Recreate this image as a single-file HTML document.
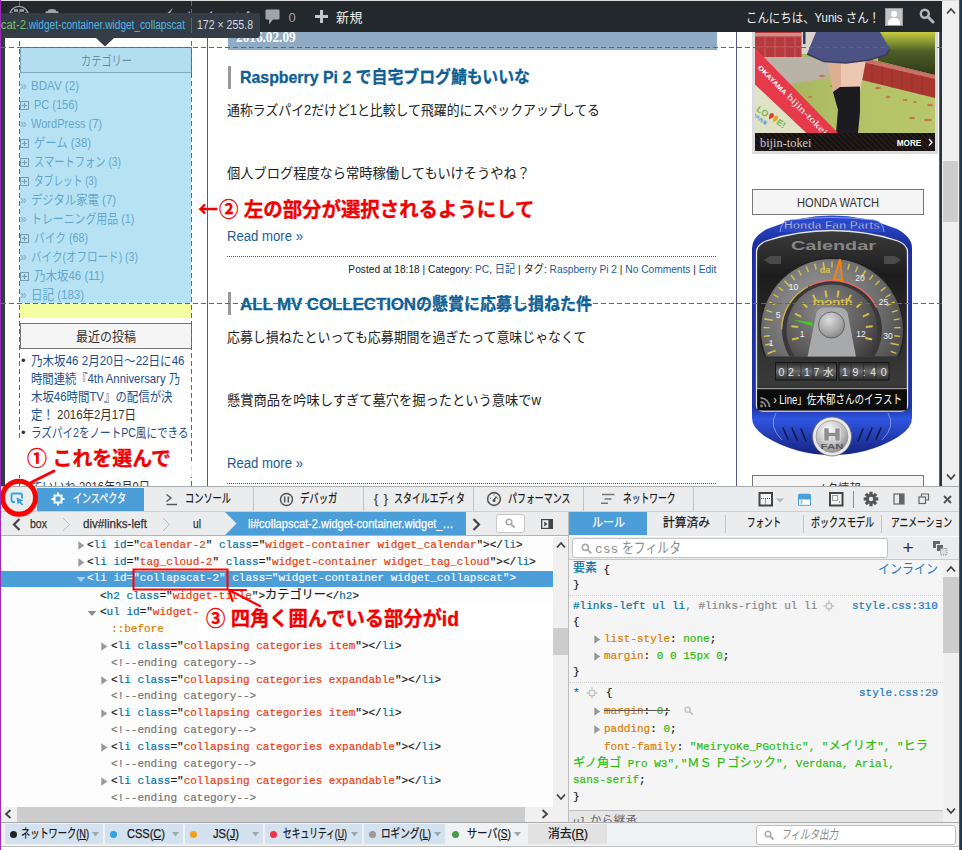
<!DOCTYPE html>
<html lang="ja"><head>
<meta charset="utf-8">
<title>Inspector</title>
<style>
html,body{margin:0;padding:0;background:#fff;}
body{width:962px;height:850px;overflow:hidden;position:relative;font-family:"Liberation Sans","Noto Sans CJK JP",sans-serif;font-size:13px;color:#222;}
.abs{position:absolute;}
#win{position:absolute;left:0;top:0;width:962px;height:850px;overflow:hidden;}
/* ---------- page ---------- */
#page{position:absolute;left:0;top:0;width:942px;height:486px;background:#fff;overflow:hidden;}
#adminbar{position:absolute;left:0;top:1px;width:942px;height:31px;background:#23282d;color:#eee;}
.vline{position:absolute;top:32px;width:1px;height:454px;background:#5a5890;}
.side li{list-style:none;}
.cat{position:absolute;left:19px;font-size:13px;color:#2a6a9e;white-space:nowrap;line-height:19px;height:19px;}
.cat{left:20px}.cat i{font-style:normal;color:#777;display:inline-block;width:11px;font-size:12px;letter-spacing:0}.cat i.p{width:14px;font-size:11px;color:#555}
.wtitle{position:absolute;box-sizing:border-box;border:1px solid #777;background:#f5f5f5;text-align:center;font-size:13px;color:#333;line-height:26px;height:26px;}
.body{position:absolute;left:227px;font-size:14px;color:#222;white-space:nowrap;line-height:20px;}
.ptitle{-webkit-text-stroke:0.3px #0e5f96;position:absolute;left:240px;font-size:17px;font-weight:bold;color:#0e5f96;white-space:nowrap;line-height:24px;}
.tbar{position:absolute;left:227px;width:3px;height:23px;background:#999;}
.more{position:absolute;left:227px;font-size:14px;color:#1a5c9a;white-space:nowrap;line-height:20px;}
.dots{position:absolute;left:227px;width:489px;height:0;border-top:1px dotted #555;}
.red{position:absolute;color:#f00000;font-weight:bold;white-space:nowrap;}
.rp{position:absolute;left:31px;font-size:13px;color:#1c4f8c;white-space:nowrap;line-height:18px;height:18px;}
.rp em span{color:#333}.rp em{font-style:normal}
.rp b{position:absolute;left:-10px;font-weight:normal;color:#333}
.meta{position:absolute;right:226px;font-size:11.5px;color:#222;white-space:nowrap;line-height:16px;}
.meta a{color:#1a5c9a}
/* ---------- devtools ---------- */
.tab,.stab,.bc,.cb{-webkit-text-stroke:0.25px currentColor}
.ml,.rl{-webkit-text-stroke:0.2px currentColor}
.red{-webkit-text-stroke:0.3px #f00000}
.bc{position:absolute;top:512px;height:24px;line-height:24px;font-size:12.5px;white-space:nowrap;color:#333;}
.selrow,.selrow *{color:#f5f7fa}
.jp{font-family:"Liberation Sans","Noto Sans CJK JP",sans-serif;font-size:12.2px}

#dt{position:absolute;left:0;top:0;width:962px;height:850px;clip-path:inset(486px 0 0 0);font-size:12px;color:#18191a;}
.mono{font-family:"Liberation Mono",monospace;font-size:11px;}
.tab{position:absolute;top:487px;height:24px;line-height:24px;width:110px;box-sizing:border-box;border-right:1px solid #c3c3c3;text-align:center;white-space:nowrap;font-size:12.5px;color:#18191a;}
.ml{position:absolute;white-space:nowrap;height:17px;line-height:17px;font-family:"Liberation Mono",monospace;font-size:11px;color:#18191a;}
.t{color:#0072ab}.a{color:#0072ab}.v{color:#ed2655}.vv{color:#ea3c0c}
.rl svg{}.c{color:#747474}
.stab{position:absolute;top:512px;height:23px;line-height:23px;width:78px;text-align:center;white-space:nowrap;font-size:12.5px;color:#18191a;}
.rl{position:absolute;white-space:nowrap;font-family:"Liberation Mono",monospace;font-size:11px;line-height:17px;height:17px;color:#18191a;}
.pn{color:#d97e00}.pv{color:#2cbb0f}.sel{color:#0072ab}.gr{color:#888}
.cb{position:absolute;top:824px;height:20px;line-height:20px;background:#d4e1ee;font-size:12.5px;white-space:nowrap;color:#18191a;}
</style>
</head>
<body>
<div id="win">
<div id="page">
 <div class="vline" style="left:207px"></div>
 <div class="vline" style="left:736px"></div>
 <!-- left sidebar -->
 <div class="wtitle" style="left:20px;top:47.3px;width:172px;height:25.7px;"><span style="display: inline-block; transform: scaleX(0.7844); transform-origin: 0px 50%; margin-right: -14.02px;">カテゴリー</span></div>
 <div class="cat" style="top:76px"><i>»</i><span style="display: inline-block; transform: scaleX(0.8899); transform-origin: 0px 50%; margin-right: -5.94px;">BDAV (2)</span></div>
 <div class="cat" style="top:95px"><i class="p"><svg width="9" height="9" viewBox="0 0 9 9" style="vertical-align:-1px"><rect x="0.5" y="0.5" width="8" height="8" fill="none" stroke="#555"></rect><path d="M2 4.5H7M4.5 2V7" stroke="#555"></path></svg></i><span style="display: inline-block; transform: scaleX(0.8456); transform-origin: 0px 50%; margin-right: -8.03px;">PC (156)</span></div>
 <div class="cat" style="top:114px"><i>»</i><span style="display: inline-block; transform: scaleX(0.8497); transform-origin: 0px 50%; margin-right: -12.56px;">WordPress (7)</span></div>
 <div class="cat" style="top:133px"><i class="p"><svg width="9" height="9" viewBox="0 0 9 9" style="vertical-align:-1px"><rect x="0.5" y="0.5" width="8" height="8" fill="none" stroke="#555"></rect><path d="M2 4.5H7M4.5 2V7" stroke="#555"></path></svg></i><span style="display: inline-block; transform: scaleX(0.8723); transform-origin: 0px 50%; margin-right: -8.34px;">ゲーム (38)</span></div>
 <div class="cat" style="top:152px"><i class="p"><svg width="9" height="9" viewBox="0 0 9 9" style="vertical-align:-1px"><rect x="0.5" y="0.5" width="8" height="8" fill="none" stroke="#555"></rect><path d="M2 4.5H7M4.5 2V7" stroke="#555"></path></svg></i><span style="display: inline-block; transform: scaleX(0.79); transform-origin: 0px 50%; margin-right: -23.13px;">スマートフォン (3)</span></div>
 <div class="cat" style="top:171px"><i class="p"><svg width="9" height="9" viewBox="0 0 9 9" style="vertical-align:-1px"><rect x="0.5" y="0.5" width="8" height="8" fill="none" stroke="#555"></rect><path d="M2 4.5H7M4.5 2V7" stroke="#555"></path></svg></i><span style="display: inline-block; transform: scaleX(0.7454); transform-origin: 0px 50%; margin-right: -21.52px;">タブレット (3)</span></div>
 <div class="cat" style="top:190px"><i>»</i><span style="display: inline-block; transform: scaleX(0.874); transform-origin: 0px 50%; margin-right: -12.25px;">デジタル家電 (7)</span></div>
 <div class="cat" style="top:209px"><i>»</i><span style="display: inline-block; transform: scaleX(0.838); transform-origin: 0px 50%; margin-right: -20.02px;">トレーニング用品 (1)</span></div>
 <div class="cat" style="top:228px"><i class="p"><svg width="9" height="9" viewBox="0 0 9 9" style="vertical-align:-1px"><rect x="0.5" y="0.5" width="8" height="8" fill="none" stroke="#555"></rect><path d="M2 4.5H7M4.5 2V7" stroke="#555"></path></svg></i><span style="display: inline-block; transform: scaleX(0.8246); transform-origin: 0px 50%; margin-right: -11.48px;">バイク (68)</span></div>
 <div class="cat" style="top:247px"><i>»</i><span style="display: inline-block; transform: scaleX(0.8112); transform-origin: 0px 50%; margin-right: -24.91px;">バイク(オフロード) (3)</span></div>
 <div class="cat" style="top:266px"><i class="p"><svg width="9" height="9" viewBox="0 0 9 9" style="vertical-align:-1px"><rect x="0.5" y="0.5" width="8" height="8" fill="none" stroke="#555"></rect><path d="M2 4.5H7M4.5 2V7" stroke="#555"></path></svg></i><span style="display: inline-block; transform: scaleX(0.8835); transform-origin: 0px 50%; margin-right: -9.23px;">乃木坂46 (11)</span></div>
 <div class="cat" style="top:285px"><i>»</i><span style="display: inline-block; transform: scaleX(0.8838); transform-origin: 0px 50%; margin-right: -6.97px;">日記 (183)</span></div>
 <div class="wtitle" style="left:20px;top:323px;width:172px;height:25.6px;"><span style="display: inline-block; transform: scaleX(0.9229); transform-origin: 0px 50%; margin-right: -5.02px;">最近の投稿</span></div>
 <div class="rp" style="top:352px"><b>•</b><span style="display: inline-block; transform: scaleX(0.8889); transform-origin: 0px 50%; margin-right: -19.19px;">乃木坂46 2月20日～22日に46</span></div>
 <div class="rp" style="top:370px"><span style="display: inline-block; transform: scaleX(0.8702); transform-origin: 0px 50%; margin-right: -22.22px;">時間連続『4th Anniversary 乃</span></div>
 <div class="rp" style="top:388px"><span style="display: inline-block; transform: scaleX(0.8785); transform-origin: 0px 50%; margin-right: -19.58px;">木坂46時間TV』の配信が決</span></div>
 <div class="rp" style="top:406px"><em style="display: inline-block; transform: scaleX(0.8805); transform-origin: 0px 50%; margin-right: -14.25px;">定！ <span>2016年2月17日</span></em></div>
 <div class="rp" style="top:424px"><b>•</b><span style="display: inline-block; transform: scaleX(0.8128); transform-origin: 0px 50%; margin-right: -36.28px;">ラズパイ2をノートPC風にできる</span></div>
 <div class="rp" style="top:478px"><em style="display: inline-block; transform: scaleX(0.8622); transform-origin: 0px 50%; margin-right: -19.02px;">ていいね <span>2016年2月9日</span></em></div>
 <!-- main column -->
 <div class="abs" style="left:228px;top:32px;width:489px;height:18px;background:#8facc4;"></div>
 <div class="abs" style="left:236px;top:27.5px;font-family:'Liberation Serif',serif;font-weight:bold;font-size:14px;color:#fff;line-height:20px;"><span style="display: inline-block; transform: scaleX(0.9476); transform-origin: 0px 50%; margin-right: -3.3px;">2016.02.09</span></div>
 <div class="tbar" style="left:228px;top:66px"></div>
 <div class="ptitle" style="top:65.7px"><span style="display: inline-block; transform: scaleX(0.9341); transform-origin: 0px 50%; margin-right: -20.45px;">Raspberry Pi 2 で自宅ブログ鯖もいいな</span></div>
 <div class="body" style="top:100px"><span style="display: inline-block; transform: scaleX(0.9199); transform-origin: 0px 50%; margin-right: -32.48px;">通称ラズパイ2だけど1と比較して飛躍的にスペックアップしてる</span></div>
 <div class="body" style="top:163px"><span style="display: inline-block; transform: scaleX(0.9451); transform-origin: 0px 50%; margin-right: -17.61px;">個人ブログ程度なら常時稼働してもいけそうやね？</span></div>
 <div class="more" style="top:226px"><span style="display: inline-block; transform: scaleX(0.939); transform-origin: 0px 50%; margin-right: -4.94px;">Read more »</span></div>
 <div class="dots" style="top:256px"></div>
 <div class="meta" style="top: 261px; transform: scaleX(0.886); transform-origin: 100% 50%;">Posted at 18:18 | Category: <a>PC</a>, <a>日記</a> | タグ: <a>Raspberry Pi 2</a> | <a>No Comments</a> | <a>Edit</a></div>
 <div class="tbar" style="left:228px;top:292px"></div>
 <div class="ptitle" style="top:293px"><span style="letter-spacing: -0.13px;">ALL MV COLLECTION</span><span style="display: inline-block; transform: scaleX(0.9412); transform-origin: 0px 50%; margin-right: -11px;">の懸賞に応募し損ねた件</span></div>
 <div class="body" style="top:327px"><span style="display: inline-block; transform: scaleX(0.923); transform-origin: 0px 50%; margin-right: -29.98px;">応募し損ねたといっても応募期間を過ぎたって意味じゃなくて</span></div>
 <div class="body" style="top:390px"><span style="display: inline-block; transform: scaleX(0.9462); transform-origin: 0px 50%; margin-right: -17.84px;">懸賞商品を吟味しすぎて墓穴を掘ったという意味でw</span></div>
 <div class="more" style="top:453px"><span style="display: inline-block; transform: scaleX(0.939); transform-origin: 0px 50%; margin-right: -4.94px;">Read more »</span></div>
 <div class="dots" style="top:483px"></div>
 <!-- right sidebar -->
 <div class="abs" style="left:752px;top:32px;width:185.5px;height:121.5px;background:#dcdcdc"></div>
<svg class="abs" style="left:755px;top:32px" width="180" height="119" viewBox="755 32 180 119">
 <defs>
  <linearGradient id="pg" x1="0" y1="0" x2="1" y2="0"><stop offset="0" stop-color="#a2b05c"></stop><stop offset="0.5" stop-color="#b2c066"></stop><stop offset="1" stop-color="#b8c66c"></stop></linearGradient>
  <linearGradient id="pb" x1="0" y1="0" x2="0" y2="1"><stop offset="0" stop-color="#c8cc40"></stop><stop offset="0.22" stop-color="#8a9a34"></stop><stop offset="0.45" stop-color="#4e5e26"></stop><stop offset="1" stop-color="#2e3a1a"></stop></linearGradient>
  <pattern id="ps" width="4" height="4" patternUnits="userSpaceOnUse" patternTransform="rotate(-45)"><rect width="4" height="4" fill="#181111"></rect><rect width="1.1" height="4" fill="#2c2222"></rect></pattern>
  <clipPath id="pc"><rect x="755" y="32" width="180" height="101"></rect></clipPath>
 </defs>
 <g clip-path="url(#pc)">
  <rect x="755" y="32" width="180" height="101" fill="url(#pg)"></rect>
  <!-- pavement -->
  <path d="M755 55 L835 58 L828 78 L790 84 L755 70 Z" fill="#b9b2a6"></path>
  <rect x="800" y="32" width="20" height="22" fill="#d9d5cc"></rect>
  <!-- planter left -->
  <rect x="755" y="32" width="46.5" height="25" fill="#b5393d"></rect>
  <rect x="755" y="33" width="46.5" height="3.5" fill="#d48a8a"></rect>
  <g stroke="#cf7a7a" stroke-width="0.6"><path d="M765 37V57M775 37V57M785 37V57M795 37V57M755 47H801"></path></g>
  <rect x="803" y="32" width="2.5" height="12" fill="#2a3a5a"></rect>
  <!-- bush -->
  <path d="M881 32 H935 V75 L878 61 Z" fill="url(#pb)"></path>
  <!-- wall -->
  <path d="M862 58 L935 75 L935 98 L862 80 Z" fill="#a8382f"></path>
  <path d="M862 58 L935 75 L935 79 L862 62 Z" fill="#c97068"></path>
  <g stroke="#8a2a24" stroke-width="0.5"><path d="M872 64V83M882 66V85M892 69V88M902 71V90M912 73V92M922 76V95"></path></g>
  <!-- leaves -->
  <g fill="#c87850"><ellipse cx="822" cy="76" rx="3" ry="1.2"></ellipse><ellipse cx="810" cy="97" rx="2.5" ry="1"></ellipse><ellipse cx="878" cy="88" rx="3" ry="1.2"></ellipse><ellipse cx="888" cy="97" rx="2.5" ry="1.2"></ellipse><ellipse cx="905" cy="100" rx="2.5" ry="1"></ellipse><ellipse cx="915" cy="102" rx="2" ry="1"></ellipse><ellipse cx="930" cy="105" rx="3" ry="1.3"></ellipse><ellipse cx="912" cy="118" rx="3" ry="1.2"></ellipse><ellipse cx="928" cy="120" rx="4" ry="1.2"></ellipse><ellipse cx="832" cy="86" rx="2" ry="1"></ellipse></g>
  <!-- legs -->
  <path d="M827 60 L841 60 L841 92 L833 92 Z" fill="#dcae94"></path>
  <path d="M841 60 L866 60 L860 92 L841 92 Z" fill="#ecc8b2"></path>
  <!-- boots -->
  <path d="M833 92 L840 87 L860 86.5 L860 112 L858 133 L836 133 L838 110 Z" fill="#1b1b20"></path>
  <!-- skirt -->
  <path d="M816 32 L880 32 L890 49 L886 55 L869 60 L846 63 L824 61.5 L807 54 Z" fill="#4c5283"></path>
  <path d="M807 54 L824 61.5 L846 63 L869 60 L886 55 L890 49" fill="none" stroke="#3a3c60" stroke-width="1.6"></path>
  <!-- logo corner + banner -->
  <path d="M755 84 L806.5 133 L755 133 Z" fill="#dfe2c4"></path>
  <path d="M755 48 L838 133 L806.5 133 L755 84.5 Z" fill="#e63a4a"></path>
  <g transform="translate(757.5,68) rotate(45.5)" fill="#fff">
   <text x="0" y="0" font-family="'Liberation Sans',sans-serif" font-weight="bold" font-size="6.6" textLength="38" lengthAdjust="spacingAndGlyphs">OKAYAMA</text>
   <text x="41" y="0" font-family="'Liberation Serif',serif" font-size="9" textLength="54" lengthAdjust="spacingAndGlyphs">bijin-tokei</text>
  </g>
  <g transform="translate(760,104) rotate(33)" font-family="'Liberation Sans',sans-serif" font-weight="bold" font-size="9"><text x="0" y="8" fill="#7ab648">LO</text><path d="M14 2 q2 -3 4 0 q1 2 -2 6 q-3 -4 -2 -6z" fill="#e63a3a"></path><path d="M19 2 q2 -3 4 0 q1 2 -2 6 q-3 -4 -2 -6z" fill="#f0a020"></path><text x="24" y="8" fill="#7ab648">E!</text><text x="-2" y="14.5" font-size="4.5" fill="#6a9acc" font-family="'Liberation Sans','Noto Sans CJK JP',sans-serif">瀬戸内海</text></g>
 </g>
 <rect x="755" y="133" width="180" height="18" fill="url(#ps)"></rect>
 <text x="760" y="146.5" font-family="'Liberation Serif',serif" font-size="11.5" fill="#c9c9c9" textLength="51.5" lengthAdjust="spacingAndGlyphs">bijin-tokei</text>
 <text x="896.8" y="146" font-family="'Liberation Sans',sans-serif" font-weight="bold" font-size="8.5" fill="#fff" textLength="24.5" lengthAdjust="spacingAndGlyphs">MORE</text>
 <path d="M929 139 L932 142.3 L929 145.6" fill="none" stroke="#fff" stroke-width="1.4"></path>
</svg>
 <div class="wtitle" style="left:752px;top:189.3px;width:172px;height:25.4px;line-height:25.4px"><span style="display: inline-block; transform: scaleX(0.8536); transform-origin: 0px 50%; margin-right: -14.06px;">HONDA WATCH</span></div>
 <svg class="abs" style="left:745px;top:212px" width="180" height="250" viewBox="745 212 180 250" font-family="'Liberation Sans','Noto Sans CJK JP',sans-serif">
 <defs>
  <linearGradient id="gb" x1="0" y1="0" x2="0" y2="1"><stop offset="0" stop-color="#2b4fd6"></stop><stop offset="0.12" stop-color="#1d2f9c"></stop><stop offset="0.8" stop-color="#1d34a8"></stop><stop offset="0.85" stop-color="#2f55e0"></stop><stop offset="1" stop-color="#15237e"></stop></linearGradient>
  <radialGradient id="gg" cx="0.42" cy="0.35" r="0.75"><stop offset="0" stop-color="#a2a2a2"></stop><stop offset="0.55" stop-color="#6e6e6e"></stop><stop offset="1" stop-color="#3a3838"></stop></radialGradient>
  <radialGradient id="gi" cx="0.4" cy="0.3" r="0.8"><stop offset="0" stop-color="#8a8a8a"></stop><stop offset="0.6" stop-color="#5a5858"></stop><stop offset="1" stop-color="#2e2c2c"></stop></radialGradient>
  <linearGradient id="gp" x1="0" y1="0" x2="0" y2="1"><stop offset="0" stop-color="#3c3c3c"></stop><stop offset="0.25" stop-color="#1c1c1c"></stop><stop offset="0.85" stop-color="#3a3a3a"></stop><stop offset="1" stop-color="#0c0c0c"></stop></linearGradient>
  <radialGradient id="gh" cx="0.4" cy="0.3" r="0.8"><stop offset="0" stop-color="#fdfdfd"></stop><stop offset="0.6" stop-color="#bcbcbc"></stop><stop offset="1" stop-color="#7c7c7c"></stop></radialGradient>
  <radialGradient id="gh2" cx="0.4" cy="0.3" r="0.8"><stop offset="0" stop-color="#dcdcdc"></stop><stop offset="0.6" stop-color="#a8a8a8"></stop><stop offset="1" stop-color="#7c7c7c"></stop></radialGradient><linearGradient id="gd" x1="0" y1="0" x2="0" y2="1"><stop offset="0" stop-color="#2a2a2a"></stop><stop offset="0.5" stop-color="#6a6a6a"></stop><stop offset="1" stop-color="#2a2a2a"></stop></linearGradient>
  <clipPath id="cg"><rect x="757" y="250" width="150" height="106.5"></rect></clipPath>
 </defs>
 <!-- body -->
 <path d="M752 248 Q752 237 767 229 Q800 215.5 832 215.5 Q864 215.5 897 229 Q912 237 912 248 L912 418 Q912 428 898 437 Q868 455 832 455 Q796 455 766 437 Q752 428 752 418 Z" fill="url(#gb)"></path>
 <!-- tab -->
 <path d="M780 232 Q781 221 790 220 Q832 215 874 220 Q883 221 884 232" fill="#2a48cc" stroke="#9fb0ee" stroke-width="0.8"></path>
 <text x="832" y="229" text-anchor="middle" font-size="10" font-weight="bold" fill="#a4b2ee" stroke="#1a2a8a" stroke-width="0.3" textLength="96" lengthAdjust="spacingAndGlyphs">Honda Fan Parts</text>
 <!-- panel -->
 <path d="M756.5 252 Q756.5 245 766 241 Q798 230.5 832 230.5 Q866 230.5 898 241 Q907.5 245 907.5 252 L907.5 405 Q907.5 411 901 411 L763 411 Q756.5 411 756.5 405 Z" fill="url(#gp)" stroke="#e8e8e8" stroke-width="1.3"></path>
 <text x="833.5" y="249.5" text-anchor="middle" font-size="13" font-weight="bold" fill="#868686" textLength="85" lengthAdjust="spacingAndGlyphs">Calendar</text>
 <path d="M764 260 L770 256 L781 256 L781 264 L770 264 Z" fill="#4a4a4a"></path>
 <path d="M901 260 L895 256 L884 256 L884 264 L895 264 Z" fill="#4a4a4a"></path>
 <!-- gauges -->
 <g clip-path="url(#cg)">
  <circle cx="832" cy="330" r="72.5" fill="#222"></circle><circle cx="832" cy="330" r="71" fill="url(#gg)"></circle>
  <g stroke="#d6c04a"><line x1="775.6" y1="350.5" x2="767.6" y2="353.4" stroke-width="1.6"></line><line x1="771.0" y1="343.7" x2="765.2" y2="345.0" stroke-width="1.4"></line><line x1="769.8" y1="335.8" x2="763.8" y2="336.4" stroke-width="1.4"></line><line x1="769.5" y1="327.8" x2="763.5" y2="327.6" stroke-width="1.4"></line><line x1="772.8" y1="320.3" x2="764.4" y2="318.9" stroke-width="1.6"></line><line x1="772.1" y1="312.1" x2="766.4" y2="310.4" stroke-width="1.4"></line><line x1="774.9" y1="304.6" x2="769.4" y2="302.1" stroke-width="1.4"></line><line x1="778.6" y1="297.5" x2="773.5" y2="294.4" stroke-width="1.4"></line><line x1="783.2" y1="291.0" x2="778.5" y2="287.2" stroke-width="1.4"></line><line x1="790.3" y1="286.8" x2="784.4" y2="280.7" stroke-width="1.6"></line><line x1="794.7" y1="279.9" x2="791.1" y2="275.1" stroke-width="1.4"></line><line x1="801.4" y1="275.5" x2="798.4" y2="270.3" stroke-width="1.4"></line><line x1="808.6" y1="272.1" x2="806.3" y2="266.5" stroke-width="1.4"></line><line x1="816.2" y1="269.5" x2="814.7" y2="263.7" stroke-width="1.4"></line><line x1="824.3" y1="270.5" x2="823.3" y2="262.1" stroke-width="1.6"></line><line x1="832.0" y1="267.5" x2="832.0" y2="261.5" stroke-width="1.4"></line><line x1="840.0" y1="268.0" x2="840.7" y2="262.1" stroke-width="1.4"></line><line x1="847.8" y1="269.5" x2="849.3" y2="263.7" stroke-width="1.4"></line><line x1="855.4" y1="272.1" x2="857.7" y2="266.5" stroke-width="1.4"></line><line x1="861.4" y1="277.7" x2="865.6" y2="270.3" stroke-width="1.6"></line><line x1="869.3" y1="279.9" x2="872.9" y2="275.1" stroke-width="1.4"></line><line x1="875.4" y1="285.0" x2="879.6" y2="280.7" stroke-width="1.4"></line><line x1="880.8" y1="291.0" x2="885.5" y2="287.2" stroke-width="1.4"></line><line x1="885.4" y1="297.5" x2="890.5" y2="294.4" stroke-width="1.4"></line><line x1="886.8" y1="305.6" x2="894.6" y2="302.1" stroke-width="1.6"></line><line x1="891.9" y1="312.1" x2="897.6" y2="310.4" stroke-width="1.4"></line><line x1="893.7" y1="319.9" x2="899.6" y2="318.9" stroke-width="1.4"></line><line x1="894.5" y1="327.8" x2="900.5" y2="327.6" stroke-width="1.4"></line><line x1="894.2" y1="335.8" x2="900.2" y2="336.4" stroke-width="1.4"></line><line x1="890.5" y1="343.2" x2="898.8" y2="345.0" stroke-width="1.6"></line><line x1="890.7" y1="351.4" x2="896.4" y2="353.4" stroke-width="1.4"></line></g>
  <circle cx="832" cy="330" r="50" fill="#3a3838"></circle>
  <circle cx="832" cy="330" r="45.5" fill="url(#gi)"></circle>
  <path d="M809.1 286.0 A50.5 50.5 0 0 1 876.6 307.3" stroke="#e06a6a" stroke-width="1.6" fill="none"></path><path d="M781.5 329.2 A50.5 50.5 0 0 1 808.3 286.4" stroke="#c8b24a" stroke-width="1.4" fill="none"></path>
  <g stroke="#d6c04a"><line x1="798.7" y1="338.1" x2="791.9" y2="339.5" stroke-width="2"></line><line x1="798.2" y1="327.1" x2="791.3" y2="326.3" stroke-width="2"></line><line x1="801.2" y1="316.6" x2="794.9" y2="313.6" stroke-width="2"></line><line x1="807.4" y1="307.5" x2="802.3" y2="302.7" stroke-width="2"></line><line x1="816.1" y1="300.9" x2="812.9" y2="294.7" stroke-width="2"></line><line x1="826.5" y1="297.4" x2="825.4" y2="290.5" stroke-width="2"></line><line x1="837.5" y1="297.4" x2="838.6" y2="290.5" stroke-width="2"></line><line x1="847.9" y1="300.9" x2="851.1" y2="294.7" stroke-width="2"></line><line x1="856.6" y1="307.5" x2="861.7" y2="302.7" stroke-width="2"></line><line x1="862.8" y1="316.6" x2="869.1" y2="313.6" stroke-width="2"></line><line x1="865.8" y1="327.1" x2="872.7" y2="326.3" stroke-width="2"></line><line x1="865.3" y1="338.1" x2="872.1" y2="339.5" stroke-width="2"></line></g>
  <path d="M807.5 357 L816 315 Q817 307.5 825 307.5 L839 307.5 Q847 307.5 848 315 L856 357 Z" fill="#a7a9ab"></path>
  <circle cx="831.5" cy="325" r="13" fill="url(#gh2)" stroke="#555" stroke-width="0.8"></circle>
  <path d="M792 319.5 L812.5 322.5 L812.5 326 Z" fill="#3fd21a"></path>
  <path d="M840 259 L842.3 280.5 L834 279 Z" fill="#8a8a8a" stroke="#ff7f00" stroke-width="1.8" stroke-linejoin="miter"></path>
 </g>
 <g font-size="8.5" fill="#f2f2f2" text-anchor="middle">
  <text x="793.5" y="289.5">10</text><text x="860" y="281">20</text><text x="778" y="318">5</text><text x="883.5" y="305">25</text><text x="771" y="346">1</text><text x="888" y="338.5">30</text><text x="802" y="337">1</text><text x="861" y="337">12</text>
 </g>
 <text x="825" y="273" text-anchor="middle" font-size="9" font-weight="bold" fill="#d6c04a">da</text>
 <text x="832.5" y="305" text-anchor="middle" font-size="9.5" font-weight="bold" fill="#d6c04a" textLength="40" lengthAdjust="spacingAndGlyphs">month</text>
 <!-- digital -->
 <rect x="775.5" y="362.5" width="61" height="17.5" fill="url(#gd)" stroke="#161616" stroke-width="1"></rect>
 <rect x="839" y="362.5" width="50" height="17.5" fill="url(#gd)" stroke="#161616" stroke-width="1"></rect>
 <g stroke="#2a2a2a" stroke-width="0.8"><path d="M787.5 363V380M801 363V380M813 363V380M825 363V380M851 363V380M863.5 363V380M876 363V380"></path></g>
 <text x="778.5" y="376" font-size="10.5" fill="#e6e8f2" textLength="55" lengthAdjust="spacing">02.17水</text>
 <text x="842" y="376" font-size="10.5" fill="#e6e8f2" textLength="44.5" lengthAdjust="spacing">19:40</text>
 <!-- ticker -->
 <rect x="757.3" y="389" width="149.5" height="21.5" fill="#0c0c0c"></rect>
 <path d="M757 388.7 H907" stroke="#cfcfcf" stroke-width="0.8"></path>
 <g fill="none" stroke="#8a8a8a" stroke-width="1.8"><path d="M760.5 398 A9 9 0 0 1 769.5 407"></path><path d="M760.5 402 A5 5 0 0 1 765.5 407"></path></g><circle cx="761.5" cy="406" r="1.4" fill="#8a8a8a"></circle>
 <text x="773.5" y="404" font-size="12.5" fill="#fff" textLength="128.5" lengthAdjust="spacingAndGlyphs">› Line」佐木郁さんのイラスト</text>
 <!-- bottom -->
 <path d="M776 413 Q768 426 782 440" fill="none" stroke="#9fb0ee" stroke-width="0.7"></path>
 <path d="M888 413 Q896 426 882 440" fill="none" stroke="#9fb0ee" stroke-width="0.7"></path>
 <g stroke="#10184a" stroke-width="1.6" stroke-linecap="round"><path d="M783 428 L788 439 M792 428 L797 440 M801 429 L806 441 M881 428 L876 439 M872 428 L867 440 M863 429 L858 441"></path></g>
 <circle cx="832" cy="436.5" r="19.5" fill="#e9e9e9" stroke="#6a6a6a" stroke-width="0.8"></circle>
 <circle cx="832" cy="436.5" r="16" fill="url(#gh)" stroke="#9a9a9a" stroke-width="0.8"></circle>
 <path d="M824 428 H829 V432.5 H835 V428 H840 V441 H835 V436.5 H829 V441 H824 Z" fill="#8e8e8e" stroke="#fff" stroke-width="0.5"></path>
 <text x="832" y="448.5" text-anchor="middle" font-size="7" font-weight="bold" fill="#5a5a5a" textLength="23" lengthAdjust="spacingAndGlyphs">FAN</text>
</svg>
 <div class="wtitle" style="left:752px;top:475px;width:172px;"><span style="display: inline-block; transform: scaleX(0.8843); transform-origin: 0px 50%; margin-right: -6.02px;">メタ情報</span></div>
 <!-- admin bar -->
 <div id="adminbar">
  
  <svg class="abs" style="left:8px;top:4px" width="22" height="22" viewBox="0 0 22 22"><circle cx="11" cy="11" r="9.6" fill="none" stroke="#a0a5aa" stroke-width="1.3"></circle><path d="M3.5 7.5 L8 18.5 L11 10 L14 18.5 L18.5 7.5 M6 5.5 H10 M12 5.5 H16" fill="none" stroke="#a0a5aa" stroke-width="2.4"></path></svg>
  <svg class="abs" style="left:42px;top:2px" width="20" height="20" viewBox="0 0 20 20"><path d="M2 14 A8 8 0 1 1 18 14 Z" fill="#a0a5aa"></path><circle cx="10" cy="4.5" r="1.2" fill="#23282d"></circle><circle cx="5" cy="7" r="1.2" fill="#23282d"></circle><circle cx="15" cy="7" r="1.2" fill="#23282d"></circle></svg>
  <svg class="abs" style="left:160px;top:6px" width="14" height="18" viewBox="0 0 14 18"><path d="M13 1 L4 9 L7 12 Z M3 11 L1 16 L6 13 Z" fill="#a0a5aa"></path></svg>
  <div class="abs" style="left:184px;top:6.5px;font-size:13px;line-height:20px;color:#eee;white-space:nowrap"><span style="display: inline-block; transform: scaleX(0.8502); transform-origin: 0px 50%; margin-right: -11.63px;">カスタマイズ</span></div>
  <svg class="abs" style="left:265px;top:8px" width="15" height="16" viewBox="0 0 15 16"><path d="M1.5 0.5 H13.5 Q14.5 0.5 14.5 1.5 V9.5 Q14.5 10.5 13.5 10.5 H8 L4 15.5 V10.5 H1.5 Q0.5 10.5 0.5 9.5 V1.5 Q0.5 0.5 1.5 0.5 Z" fill="#a0a5aa"></path></svg>
  <div class="abs" style="left:288.5px;top:7px;font-size:13px;line-height:20px;color:#a0a5aa">0</div>
  <svg class="abs" style="left:315px;top:9px" width="13" height="13" viewBox="0 0 13 13"><path d="M5 0 H8 V5 H13 V8 H8 V13 H5 V8 H0 V5 H5 Z" fill="#c3c7cb"></path></svg>
  <div class="abs" style="left:336px;top:6.5px;font-size:13px;line-height:20px;color:#eee;white-space:nowrap"><span style="letter-spacing: 0.5px;">新規</span></div>
  <div class="abs" style="left:745.5px;top:6.5px;font-size:13px;line-height:20px;color:#eee;white-space:nowrap"><span style="display: inline-block; transform: scaleX(0.8791); transform-origin: 0px 50%; margin-right: -18.42px;">こんにちは、Yunis さん！</span></div>
  <div class="abs" style="left:885px;top:7px;width:18px;height:18px;background:#c4c4c4;box-sizing:border-box;border:1px solid #9a9a9a;overflow:hidden"><div class="abs" style="left:5px;top:2px;width:6px;height:6px;border-radius:50%;background:#fff"></div><div class="abs" style="left:2px;top:8.5px;width:12px;height:12px;border-radius:5px 5px 0 0;background:#fff"></div></div>
  <svg class="abs" style="left:919px;top:7px" width="16" height="16" viewBox="0 0 16 16"><circle cx="5.8" cy="5.8" r="4" fill="none" stroke="#b4b9be" stroke-width="2.4"></circle><path d="M8.8 8.8 L14 14" stroke="#b4b9be" stroke-width="3" stroke-linecap="round"></path></svg>

 </div>
 <!-- page borders -->
 <div class="abs" style="left:1px;top:32px;width:4px;height:454px;background:#333b45;"></div>
 <div class="abs" style="left:939px;top:32px;width:3px;height:454px;background:#2a3342;border-left:1px solid #5a5c9c;box-sizing:border-box"></div>
</div>
<!-- page scrollbar -->
<div class="abs" style="left:942px;top:1px;width:17px;height:485px;background:#f0f0f0;"></div>
<div class="abs" style="left:943px;top:161px;width:15px;height:61px;background:#cdcdcd;"></div>

<div id="dt">
<div class="abs" style="left:0;top:486px;width:962px;height:364px;background:#fcfcfc"></div>
<div class="abs" style="left:1px;top:486px;width:958px;height:1px;background:#aaa"></div>
<div class="abs" style="left:1px;top:487px;width:958px;height:49px;background:#ebeced"></div>
<div class="abs" style="left:1px;top:511px;width:958px;height:1px;background:#d0d0d0"></div>
<div class="abs" style="left:1px;top:535px;width:958px;height:1px;background:#b4b4b4"></div>
<!-- toolbox tabs -->
<div class="tab" style="left:37px;width:107px;background:#4c9ed9;color:#fff;border-right:none;top:488px;height:23px;line-height:22px"><span class="abs" style="left: 36px; transform: scaleX(0.7222); transform-origin: 0px 50%;">インスペクタ</span></div>
<div class="tab" style="left:144px;"><span class="abs" style="left: 41px; transform: scaleX(0.7358); transform-origin: 0px 50%;">コンソール</span></div>
<div class="tab" style="left:254px;"><span class="abs" style="left: 46px; transform: scaleX(0.7498); transform-origin: 0px 50%;">デバッガ</span></div>
<div class="tab" style="left:364px;"><span class="abs" style="left:10px;letter-spacing:1px;color:#444">{&nbsp;}</span><span class="abs" style="left: 30px; transform: scaleX(0.7162); transform-origin: 0px 50%;">スタイルエディタ</span></div>
<div class="tab" style="left:474px;"><span class="abs" style="left: 33.5px; transform: scaleX(0.7162); transform-origin: 0px 50%;">パフォーマンス</span></div>
<div class="tab" style="left:584px;"><span class="abs" style="left: 38.5px; transform: scaleX(0.6999); transform-origin: 0px 50%;">ネットワーク</span></div>

<!-- picker -->
<svg class="abs" style="left:10px;top:492px" width="15" height="15" viewBox="0 0 15 15"><path d="M12 6.5 V3 Q12 1.5 10.5 1.5 H3 Q1.5 1.5 1.5 3 V8.5 Q1.5 10 3 10 H5" fill="none" stroke="#2ea3e6" stroke-width="1.8"></path><path d="M6.5 5.5 L13.5 8.6 L10.8 9.6 L13.2 12.6 L11.9 13.6 L9.5 10.6 L7.6 12.6 Z" fill="#2ea3e6"></path></svg>
<!-- inspector icon -->
<svg class="abs" style="left:51px;top:492px" width="14" height="14" viewBox="0 0 14 14"><rect x="3.5" y="3.5" width="7" height="7" fill="none" stroke="#fff" stroke-width="2"></rect><path d="M7 0.5V3M7 11V13.5M0.5 7H3M11 7H13.5" stroke="#fff" stroke-width="2"></path></svg>
<!-- console icon -->
<svg class="abs" style="left:165px;top:493px" width="13" height="13" viewBox="0 0 13 13"><path d="M1.5 1.5 L6 5 L1.5 8.5" fill="none" stroke="#555" stroke-width="1.4"></path><path d="M1.5 11.5 H12" stroke="#555" stroke-width="1.4"></path></svg>
<!-- debugger icon -->
<svg class="abs" style="left:279px;top:492px" width="15" height="15" viewBox="0 0 15 15"><circle cx="7.5" cy="7.5" r="6" fill="none" stroke="#555" stroke-width="1.5"></circle><path d="M5.7 4.5V10.5M9.3 4.5V10.5" stroke="#555" stroke-width="1.6"></path></svg>
<!-- performance icon -->
<svg class="abs" style="left:486px;top:491px" width="16" height="16" viewBox="0 0 16 16"><circle cx="8" cy="8" r="6.4" fill="none" stroke="#555" stroke-width="1.6"></circle><path d="M8 9 L10.5 5.5" stroke="#555" stroke-width="1.5"></path><circle cx="8" cy="9.5" r="1.5" fill="#555"></circle><path d="M4 7 L5 7.5 M8 3.5 V4.5 M12 7 L11 7.5" stroke="#555" stroke-width="1"></path></svg>
<!-- network icon -->
<svg class="abs" style="left:600px;top:492px" width="16" height="14" viewBox="0 0 16 14"><path d="M2 2.5H14.5M4.5 7H11.5M1 11.2H8" stroke="#777" stroke-width="1.5"></path></svg>
<!-- right icons -->
<svg class="abs" style="left:758px;top:492px" width="28" height="15" viewBox="0 0 28 15"><rect x="1.5" y="1" width="12.5" height="12.5" fill="#f4f4f4" stroke="#444" stroke-width="2"></rect><path d="M3 6.5H13" stroke="#444" stroke-width="1" stroke-dasharray="1 1"></path><path d="M7.5 6.5V13" stroke="#444" stroke-width="1" stroke-dasharray="1 1"></path><path d="M18 6.5 H26 L22 10.5 Z" fill="#b4b4b4"></path></svg>
<svg class="abs" style="left:797px;top:493px" width="15" height="14" viewBox="0 0 15 14"><rect x="1" y="0.8" width="13" height="12" rx="1.5" fill="#4c9ed9"></rect><rect x="2" y="6.5" width="11" height="5.3" fill="#fff"></rect><path d="M3.5 7.5 L5.5 9.2 L3.5 10.9" fill="none" stroke="#4c9ed9" stroke-width="1"></path></svg>
<svg class="abs" style="left:829px;top:492px" width="15" height="15" viewBox="0 0 15 15"><rect x="1" y="1" width="12.5" height="12.5" fill="#f4f4f4" stroke="#444" stroke-width="2"></rect><rect x="3.5" y="3.5" width="5" height="5" fill="none" stroke="#444" stroke-width="1" stroke-dasharray="1 1"></rect><path d="M9.5 10.5 L11 9 V10.5Z" fill="#444"></path></svg>
<div class="abs" style="left:853px;top:491px;width:1px;height:17px;background:#8a8a8a"></div>
<svg class="abs" style="left:863px;top:491px" width="16" height="16" viewBox="0 0 16 16"><g transform="translate(8 8)"><g fill="#555"><rect x="-1.6" y="-7.3" width="3.2" height="14.6"></rect><rect x="-1.6" y="-7.3" width="3.2" height="14.6" transform="rotate(45)"></rect><rect x="-1.6" y="-7.3" width="3.2" height="14.6" transform="rotate(90)"></rect><rect x="-1.6" y="-7.3" width="3.2" height="14.6" transform="rotate(135)"></rect></g><circle r="5" fill="#555"></circle><circle r="2.2" fill="#ebeced"></circle></g></svg>
<svg class="abs" style="left:893px;top:493px" width="12" height="12" viewBox="0 0 12 12"><rect x="1" y="1" width="10" height="10" fill="none" stroke="#666" stroke-width="1.2"></rect><rect x="6" y="1" width="5" height="10" fill="#666"></rect></svg>
<svg class="abs" style="left:918px;top:493px" width="12" height="12" viewBox="0 0 12 12"><path d="M3.5 3.5 V1 H10.5 V7 H8" fill="none" stroke="#666" stroke-width="1.2"></path><rect x="1" y="4" width="6.5" height="6.5" fill="none" stroke="#666" stroke-width="1.2"></rect></svg>
<svg class="abs" style="left:943px;top:495px" width="9" height="9" viewBox="0 0 9 9"><path d="M1 1 L8 8 M8 1 L1 8" stroke="#555" stroke-width="2"></path></svg>

<!-- breadcrumbs -->
<div class="bc" style="left:30px"><span style="display: inline-block; transform: scaleX(0.8434); transform-origin: 0px 50%; margin-right: -3.16px;">box</span></div>
<div class="bc" style="left:83px"><span style="display: inline-block; transform: scaleX(0.9305); transform-origin: 0px 50%; margin-right: -4.78px;">div#links-left</span></div>
<div class="bc" style="left:193px"><span style="display: inline-block; transform: scaleX(0.8218); transform-origin: 0px 50%; margin-right: -1.73px;">ul</span></div>
<svg class="abs" style="left:225px;top:512px" width="241" height="23" viewBox="0 0 241 24" preserveAspectRatio="none"><path d="M0 0 L241 0 L241 24 L0 24 L11.5 12 Z" fill="#4c9ed9"></path></svg>
<div class="bc" style="left:247.5px;color:#fff"><span style="display: inline-block; transform: scaleX(0.8829); transform-origin: 0px 50%; margin-right: -27.27px;">li#collapscat-2.widget-container.widget_…</span></div>

<div class="abs" style="left:496px;top:514px;width:29px;height:19px;box-sizing:border-box;border:1px solid #c8c8c8;border-radius:3px;background:#fff"></div>
<svg class="abs" style="left:12px;top:518px" width="9" height="13" viewBox="0 0 9 13"><path d="M7.5 1 L2 6.5 L7.5 12" fill="none" stroke="#444" stroke-width="2.2"></path></svg>
<svg class="abs" style="left:62px;top:517px" width="9" height="15" viewBox="0 0 9 15"><path d="M1 1 L7.5 7.5 L1 14" fill="none" stroke="#bcbcbc" stroke-width="1"></path></svg>
<svg class="abs" style="left:162px;top:517px" width="9" height="15" viewBox="0 0 9 15"><path d="M1 1 L7.5 7.5 L1 14" fill="none" stroke="#bcbcbc" stroke-width="1"></path></svg>
<svg class="abs" style="left:472px;top:518px" width="9" height="13" viewBox="0 0 9 13"><path d="M1.5 1 L7 6.5 L1.5 12" fill="none" stroke="#444" stroke-width="2.2"></path></svg>
<svg class="abs" style="left:505px;top:518px" width="11" height="11" viewBox="0 0 11 11"><circle cx="4" cy="4" r="2.8" fill="none" stroke="#a8a8a8" stroke-width="1.5"></circle><path d="M6 6 L9.5 9.5" stroke="#a8a8a8" stroke-width="1.8"></path></svg>
<svg class="abs" style="left:541px;top:519px" width="12" height="10" viewBox="0 0 13 12" preserveAspectRatio="none"><rect x="0.7" y="0.7" width="11.6" height="10.6" fill="none" stroke="#444" stroke-width="1.4"></rect><rect x="8" y="0.7" width="4.3" height="10.6" fill="#444"></rect><path d="M3.5 3 L7 6 L3.5 9 Z" fill="#444"></path></svg>

<!-- splitter -->
<div class="abs" style="left:568px;top:512px;width:1px;height:310px;background:#bdbdbd"></div>
<!-- sidebar tabs -->
<div class="abs" style="left:569px;top:512px;width:390px;height:24px;background:#ebeced"></div>
<div class="stab" style="left:569px;background:#4c9ed9;color:#fff"><span style="display: inline-block; transform: scaleX(0.8796); transform-origin: 0px 50%; margin-right: -4.52px;">ルール</span></div>
<div class="stab" style="left:647px;"><span style="display: inline-block; transform: scaleX(0.9397); transform-origin: 0px 50%; margin-right: -3.02px;">計算済み</span></div>
<div class="stab" style="left:725px;"><span style="display: inline-block; transform: scaleX(0.6798); transform-origin: 0px 50%; margin-right: -16.02px;">フォント</span></div>
<div class="stab" style="left:804px;"><span style="display: inline-block; transform: scaleX(0.723); transform-origin: 0px 50%; margin-right: -24.14px;">ボックスモデル</span></div>
<div class="stab" style="left:882px;"><span style="display: inline-block; transform: scaleX(0.701); transform-origin: 0px 50%; margin-right: -26.02px;">アニメーション</span></div>
<div class="abs" style="left:725px;top:515px;width:1px;height:18px;background:#c3c3c3"></div>
<div class="abs" style="left:803px;top:515px;width:1px;height:18px;background:#c3c3c3"></div>
<div class="abs" style="left:881px;top:515px;width:1px;height:18px;background:#c3c3c3"></div>
<!-- markup view -->
<div class="abs" style="left:1px;top:537px;width:552px;height:270px;background:#fdfdfd"></div>
<div class="abs" style="left:1px;top:570.5px;width:552px;height:16.5px;background:#4c9ed9"></div>
<div class="ml" style="left:87px;top:536.7px;">&lt;<span class="t">li</span> <span class="a">id</span>="<span class="vv">calendar-2</span>" <span class="a">class</span>="<span class="vv">widget-container widget_calendar</span>"&gt;&lt;/<span class="t">li</span>&gt;</div>
<div class="ml" style="left:87px;top:553.6px;">&lt;<span class="t">li</span> <span class="a">id</span>="<span class="vv">tag_cloud-2</span>" <span class="a">class</span>="<span class="vv">widget-container widget_tag_cloud</span>"&gt;&lt;/<span class="t">li</span>&gt;</div>
<div class="ml" style="left:87px;top:570.4px;"><span class="selrow">&lt;li id="collapscat-2" class="widget-container widget_collapscat"&gt;</span></div>
<div class="ml" style="left:100px;top:587.2px;">&lt;<span class="t">h2</span> <span class="a">class</span>="<span class="vv">widget-title</span>"&gt;<span class="jp">カテゴリー</span>&lt;/<span class="t">h2</span>&gt;</div>
<div class="ml" style="left:100px;top:604.1px;">&lt;<span class="t">ul</span> <span class="a">id</span>="<span class="vv">widget-</span></div>
<div class="ml" style="left:111px;top:621.0px;"><span class="pn">::before</span></div>
<div class="ml" style="left:111px;top:637.8px;">&lt;<span class="t">li</span> <span class="a">class</span>="<span class="vv">collapsing categories item</span>"&gt;&lt;/<span class="t">li</span>&gt;</div>
<div class="ml" style="left:111px;top:654.7px;"><span class="c">&lt;!--ending category--&gt;</span></div>
<div class="ml" style="left:111px;top:671.5px;">&lt;<span class="t">li</span> <span class="a">class</span>="<span class="vv">collapsing categories expandable</span>"&gt;&lt;/<span class="t">li</span>&gt;</div>
<div class="ml" style="left:111px;top:688.4px;"><span class="c">&lt;!--ending category--&gt;</span></div>
<div class="ml" style="left:111px;top:705.2px;">&lt;<span class="t">li</span> <span class="a">class</span>="<span class="vv">collapsing categories item</span>"&gt;&lt;/<span class="t">li</span>&gt;</div>
<div class="ml" style="left:111px;top:722.1px;"><span class="c">&lt;!--ending category--&gt;</span></div>
<div class="ml" style="left:111px;top:738.9px;">&lt;<span class="t">li</span> <span class="a">class</span>="<span class="vv">collapsing categories expandable</span>"&gt;&lt;/<span class="t">li</span>&gt;</div>
<div class="ml" style="left:111px;top:755.8px;"><span class="c">&lt;!--ending category--&gt;</span></div>
<div class="ml" style="left:111px;top:772.6px;">&lt;<span class="t">li</span> <span class="a">class</span>="<span class="vv">collapsing categories expandable</span>"&gt;&lt;/<span class="t">li</span>&gt;</div>
<div class="ml" style="left:111px;top:789.5px;"><span class="c">&lt;!--ending category--&gt;</span></div>
<svg class="abs" style="left:77.5px;top:540.7px" width="7" height="9" viewBox="0 0 7 9"><path d="M0.3 0.2 L6.3 4.5 L0.3 8.8 Z" fill="#999"></path></svg>
<svg class="abs" style="left:77.5px;top:557.6px" width="7" height="9" viewBox="0 0 7 9"><path d="M0.3 0.2 L6.3 4.5 L0.3 8.8 Z" fill="#999"></path></svg>
<svg class="abs" style="left:75.5px;top:575.9px" width="10" height="7" viewBox="0 0 9 7" preserveAspectRatio="none"><path d="M0.5 1 L8.5 1 L4.5 6 Z" fill="#a9cdea"></path></svg>
<svg class="abs" style="left:87px;top:609.6px" width="10" height="7" viewBox="0 0 9 7" preserveAspectRatio="none"><path d="M0.5 1 L8.5 1 L4.5 6 Z" fill="#8e8e8e"></path></svg>
<svg class="abs" style="left:101px;top:641.8px" width="7" height="9" viewBox="0 0 7 9"><path d="M0.3 0.2 L6.3 4.5 L0.3 8.8 Z" fill="#999"></path></svg>
<svg class="abs" style="left:101px;top:675.5px" width="7" height="9" viewBox="0 0 7 9"><path d="M0.3 0.2 L6.3 4.5 L0.3 8.8 Z" fill="#999"></path></svg>
<svg class="abs" style="left:101px;top:709.2px" width="7" height="9" viewBox="0 0 7 9"><path d="M0.3 0.2 L6.3 4.5 L0.3 8.8 Z" fill="#999"></path></svg>
<svg class="abs" style="left:101px;top:742.9px" width="7" height="9" viewBox="0 0 7 9"><path d="M0.3 0.2 L6.3 4.5 L0.3 8.8 Z" fill="#999"></path></svg>
<svg class="abs" style="left:101px;top:776.6px" width="7" height="9" viewBox="0 0 7 9"><path d="M0.3 0.2 L6.3 4.5 L0.3 8.8 Z" fill="#999"></path></svg>
<!-- markup scrollbars -->
<div class="abs" style="left:553px;top:537px;width:15px;height:270px;background:#f0f0f0"></div>
<div class="abs" style="left:553px;top:628px;width:15px;height:27px;background:#cdcdcd"></div>
<div class="abs" style="left:1px;top:807px;width:567px;height:15px;background:#f0f0f0"></div>
<div class="abs" style="left:17px;top:807px;width:508px;height:15px;background:#cdcdcd"></div>



<div class="abs" style="left:569px;top:537px;width:390px;height:285px;background:#f5f5f5"></div>
<div class="abs" style="left:569px;top:537px;width:390px;height:22px;background:#ebeced"></div>
<div class="abs" style="left:569px;top:559px;width:390px;height:1px;background:#c8c8c8"></div>
<div class="abs" style="left:572px;top:538px;width:316px;height:20px;box-sizing:border-box;border:1px solid #c3c3c3;border-radius:3px;background:#fff"></div>
<svg class="abs" style="left:580.5px;top:542.5px" width="12" height="12" viewBox="0 0 11 11"><circle cx="4" cy="4" r="2.8" fill="none" stroke="#aaa" stroke-width="1.5"></circle><path d="M6 6 L9.5 9.5" stroke="#aaa" stroke-width="1.8"></path></svg><div class="abs" style="left:595px;top:538.5px;font-size:14px;line-height:18px;color:#8e8e8e;white-space:nowrap"><span class="mono" style="font-size:13px">css</span></div><div class="abs" style="left:621.5px;top:539px;font-size:14.5px;line-height:18px;color:#8e8e8e;white-space:nowrap"><span style="display: inline-block; transform: scaleX(0.817); transform-origin: 0px 50%; margin-right: -13.22px;">をフィルタ</span></div>
<div class="abs" style="left:901px;top:537px;font-size:19px;line-height:22px;color:#333;width:14px;text-align:center">+</div>
<div class="rl" style="left:573px;top:560.8px;"><span class="sel jp" style="font-size:12px;position:relative;top:-1px">要素</span> {</div>
<div class="abs" style="right:24px;top:560px;font-size:13px;line-height:18px;color:#1a7cc4;white-space:nowrap"><span style="display: inline-block; transform: scaleX(0.9229); transform-origin: 0px 50%; margin-right: -5.02px;">インライン</span></div>
<div class="rl" style="left:573px;top:577.1px;">}</div>
<div class="abs" style="left:569px;top:595px;width:374px;height:0;border-top:1px dotted #cfcfcf"></div>
<div class="rl" style="left:573px;top:597.5px;"><span class="sel">#links-left ul li</span><span class="gr">, #links-right ul li</span></div>
<div class="rl" style="left:852px;top:597.5px;"><span class="sel" style="color:#1a7cc4">style.css:310</span></div>
<div class="rl" style="left:573px;top:614.1px;">{</div>
<svg class="abs" style="left:593.5px;top:635.1px" width="7" height="9" viewBox="0 0 7 9"><path d="M0.3 0.2 L6.3 4.5 L0.3 8.8 Z" fill="#999"></path></svg>
<div class="rl" style="left:604px;top:631.1px;"><span class="pn">list-style</span>: <span class="pv">none</span>;</div>
<svg class="abs" style="left:593.5px;top:652.0px" width="7" height="9" viewBox="0 0 7 9"><path d="M0.3 0.2 L6.3 4.5 L0.3 8.8 Z" fill="#999"></path></svg>
<div class="rl" style="left:604px;top:648.0px;"><span class="pn">margin</span>: <span class="pv">0 0 15px 0</span>;</div>
<div class="rl" style="left:573px;top:664.3px;">}</div>
<div class="abs" style="left:569px;top:682px;width:374px;height:0;border-top:1px dotted #cfcfcf"></div>
<div class="rl" style="left:573px;top:684.5px;"><span class="sel">*</span></div>
<div class="rl" style="left:606px;top:684.5px;">{</div>
<div class="rl" style="left:859px;top:684.5px;"><span class="sel" style="color:#1a7cc4">style.css:29</span></div>
<svg class="abs" style="left:593.5px;top:707.3px" width="7" height="9" viewBox="0 0 7 9"><path d="M0.3 0.2 L6.3 4.5 L0.3 8.8 Z" fill="#999"></path></svg>
<div class="rl" style="left:604px;top:703.3px;"><span style="text-decoration:line-through;text-decoration-color:#555"><span class="pn">margin</span>: <span class="pv">0</span>;</span></div>
<svg class="abs" style="left:593.5px;top:725.0px" width="7" height="9" viewBox="0 0 7 9"><path d="M0.3 0.2 L6.3 4.5 L0.3 8.8 Z" fill="#999"></path></svg>
<div class="rl" style="left:604px;top:721.0px;"><span class="pn">padding</span>: <span class="pv">0</span>;</div>
<div class="rl" style="left:604px;top:737.9px;"><span class="pn">font-family</span>: <span class="pv">"MeiryoKe_PGothic", "<span class="jp">メイリオ</span>", "<span class="jp">ヒラ</span></span></div>
<div class="rl" style="left:573px;top:754.5px;"><span class="pv"><span class="jp">ギノ角ゴ</span> Pro W3","<span class="jp">ＭＳ Ｐゴシック</span>", Verdana, Arial,</span></div>
<div class="rl" style="left:573px;top:771.5px;"><span class="pv">sans-serif</span>;</div>
<div class="rl" style="left:573px;top:788.5px;">}</div>
<div class="abs" style="left:569px;top:810px;width:374px;height:12px;background:#e6e6e6;border-top:1px solid #bdbdbd;box-sizing:border-box"></div>
<div class="abs" style="left:573px;top:813px;font-size:12px;line-height:17px;color:#666;white-space:nowrap"><span class="mono">ul</span> から継承</div>
<svg class="abs" style="left:823px;top:600px" width="12" height="12" viewBox="0 0 12 12"><rect x="3.5" y="3.5" width="5" height="5" fill="none" stroke="#c4c4c4" stroke-width="1.4"></rect><path d="M6 0.5V3M6 9V11.5M0.5 6H3M9 6H11.5" stroke="#c4c4c4" stroke-width="1.4"></path></svg><svg class="abs" style="left:586px;top:686.5px" width="12" height="12" viewBox="0 0 12 12"><rect x="3.5" y="3.5" width="5" height="5" fill="none" stroke="#c4c4c4" stroke-width="1.4"></rect><path d="M6 0.5V3M6 9V11.5M0.5 6H3M9 6H11.5" stroke="#c4c4c4" stroke-width="1.4"></path></svg><svg class="abs" style="left:684px;top:706px" width="10" height="10" viewBox="0 0 11 11"><circle cx="4" cy="4" r="2.8" fill="none" stroke="#c0c0c0" stroke-width="1.5"></circle><path d="M6 6 L9.5 9.5" stroke="#c0c0c0" stroke-width="1.8"></path></svg>
<div class="abs" style="left:943px;top:560px;width:16px;height:262px;background:#f0f0f0"></div>
<div class="abs" style="left:943px;top:577px;width:16px;height:76px;background:#cdcdcd"></div>
<div class="abs" style="left:1px;top:822px;width:958px;height:28px;background:#f0f1f2"></div>
<div class="abs" style="left:1px;top:822px;width:958px;height:1px;background:#aaa"></div>
<div class="abs" style="left:1px;top:846px;width:958px;height:1px;background:#c0c0c0"></div>
<div class="abs" style="left:1px;top:847px;width:958px;height:3px;background:#fff"></div>
<div class="cb" style="left:5px;width:98px;"><span class="abs" style="left:5px;top:6.5px;width:7px;height:7px;border-radius:50%;background:#222"></span><span class="abs" style="left: 16px; transform: scaleX(0.7361); transform-origin: 0px 50%;">ネットワーク(<u>N</u>)</span><svg class="abs" style="right:4px;top:8px" width="7" height="5" viewBox="0 0 7 5"><path d="M0 0 L7 0 L3.5 4.5Z" fill="#9aa"></path></svg></div>
<div class="cb" style="left:105px;width:78px;"><span class="abs" style="left:5px;top:6.5px;width:7px;height:7px;border-radius:50%;background:#2ea3e6"></span><span class="abs" style="left: 22px; transform: scaleX(0.8821); transform-origin: 0px 50%;">CSS(<u>C</u>)</span><svg class="abs" style="right:4px;top:8px" width="7" height="5" viewBox="0 0 7 5"><path d="M0 0 L7 0 L3.5 4.5Z" fill="#9aa"></path></svg></div>
<div class="cb" style="left:185px;width:78px;"><span class="abs" style="left:5px;top:6.5px;width:7px;height:7px;border-radius:50%;background:#f6a01a"></span><span class="abs" style="left: 28px; transform: scaleX(0.8913); transform-origin: 0px 50%;">JS(<u>J</u>)</span><svg class="abs" style="right:4px;top:8px" width="7" height="5" viewBox="0 0 7 5"><path d="M0 0 L7 0 L3.5 4.5Z" fill="#9aa"></path></svg></div>
<div class="cb" style="left:265px;width:97px;"><span class="abs" style="left:5px;top:6.5px;width:7px;height:7px;border-radius:50%;background:#ee3344"></span><span class="abs" style="left: 18px; transform: scaleX(0.6985); transform-origin: 0px 50%;">セキュリティ(<u>U</u>)</span><svg class="abs" style="right:4px;top:8px" width="7" height="5" viewBox="0 0 7 5"><path d="M0 0 L7 0 L3.5 4.5Z" fill="#9aa"></path></svg></div>
<div class="cb" style="left:364px;width:81px;"><span class="abs" style="left:5px;top:6.5px;width:7px;height:7px;border-radius:50%;background:#9a9a9a"></span><span class="abs" style="left: 17px; transform: scaleX(0.7657); transform-origin: 0px 50%;">ロギング(<u>L</u>)</span><svg class="abs" style="right:4px;top:8px" width="7" height="5" viewBox="0 0 7 5"><path d="M0 0 L7 0 L3.5 4.5Z" fill="#9aa"></path></svg></div>
<div class="cb" style="left:447px;width:78px;background:none;"><span class="abs" style="left:5px;top:6.5px;width:7px;height:7px;border-radius:50%;background:#4a9a4a"></span><span class="abs" style="left: 20px; transform: scaleX(0.8139); transform-origin: 0px 50%;">サーバ(<u>S</u>)</span><svg class="abs" style="right:4px;top:8px" width="7" height="5" viewBox="0 0 7 5"><path d="M0 0 L7 0 L3.5 4.5Z" fill="#9aa"></path></svg></div>
<div class="cb" style="left:528px;width:79px;background:#e2e2e3;text-align:center"><span style="display: inline-block; transform: scaleX(0.944); transform-origin: 0px 50%; margin-right: -2.38px;">消去(<u>R</u>)</span></div>
<div class="abs" style="left:756px;top:825px;width:200px;height:20px;box-sizing:border-box;border:1px solid #bdbdbd;border-radius:3px;background:#fff"></div>
<svg class="abs" style="left:764px;top:830px" width="11" height="11" viewBox="0 0 11 11"><circle cx="4" cy="4" r="2.8" fill="none" stroke="#aaa" stroke-width="1.5"></circle><path d="M6 6 L9.5 9.5" stroke="#aaa" stroke-width="1.8"></path></svg><div class="abs" style="left:781px;top:826px;font-size:13px;line-height:18px;color:#8a8a8a;font-style:italic;white-space:nowrap"><span style="display: inline-block; transform: scaleX(0.7331); transform-origin: 0px 50%; margin-right: -20.75px;">フィルタ出力</span></div>
<svg class="abs" style="left:556px;top:541px" width="10" height="8" viewBox="0 0 10 8"><path d="M1 6.5 L5 2 L9 6.5" fill="none" stroke="#444" stroke-width="1.8"></path></svg>
<svg class="abs" style="left:556px;top:793px" width="10" height="8" viewBox="0 0 10 8"><path d="M1 1.5 L5 6 L9 1.5" fill="none" stroke="#444" stroke-width="1.8"></path></svg>
<svg class="abs" style="left:4px;top:809px" width="8" height="10" viewBox="0 0 8 10"><path d="M6.5 1 L2 5 L6.5 9" fill="none" stroke="#444" stroke-width="1.8"></path></svg>
<svg class="abs" style="left:541px;top:809px" width="8" height="10" viewBox="0 0 8 10"><path d="M1.5 1 L6 5 L1.5 9" fill="none" stroke="#444" stroke-width="1.8"></path></svg>
<svg class="abs" style="left:946px;top:565px" width="10" height="8" viewBox="0 0 10 8"><path d="M1 6.5 L5 2 L9 6.5" fill="none" stroke="#444" stroke-width="1.8"></path></svg>
<svg class="abs" style="left:946px;top:807px" width="10" height="8" viewBox="0 0 10 8"><path d="M1 1.5 L5 6 L9 1.5" fill="none" stroke="#444" stroke-width="1.8"></path></svg>

<svg class="abs" style="left:932px;top:539.5px" width="16" height="16" viewBox="0 0 16 16"><rect x="1" y="1" width="7" height="7" fill="#666"></rect><rect x="4.5" y="4.5" width="7" height="7" fill="#666" stroke="#ebeced" stroke-width="1"></rect><rect x="8.5" y="8.5" width="6.5" height="6.5" fill="#ddd" stroke="#888" stroke-width="1" stroke-dasharray="1 1"></rect></svg>
</div>

<svg class="abs" style="left:946px;top:7px" width="10" height="8" viewBox="0 0 10 8"><path d="M1 6.5 L5 2 L9 6.5" fill="none" stroke="#444" stroke-width="1.8"></path></svg>
<svg class="abs" style="left:946px;top:473px" width="10" height="8" viewBox="0 0 10 8"><path d="M1 1.5 L5 6 L9 1.5" fill="none" stroke="#444" stroke-width="1.8"></path></svg>
<!-- highlighter -->
<div class="abs" style="left:20px;top:47.5px;width:171.3px;height:255.8px;background:rgba(135,206,235,0.6)"></div>
<div class="abs" style="left:20px;top:303.3px;width:171.3px;height:15px;background:rgba(237,255,100,0.6)"></div>
<svg class="abs" style="left:0;top:0" width="962" height="486" viewBox="0 0 962 486">
 <g stroke="#0088cc" stroke-width="1" stroke-dasharray="5 3" fill="none" shape-rendering="crispEdges">
  <line x1="1" y1="47.5" x2="942" y2="47.5"></line>
  <line x1="1" y1="303.5" x2="942" y2="303.5"></line>
  <line x1="19.5" y1="1" x2="19.5" y2="486"></line>
  <line x1="191.5" y1="1" x2="191.5" y2="486"></line>
 </g>
</svg>
<!-- annotation backgrounds + text -->
<div class="abs" style="left:16px;top:441px;width:174px;height:34px;background:#fff"></div><div class="abs" style="left:190px;top:461px;width:3px;height:16px;background:rgba(255,255,255,0.8)"></div>
<div class="red" style="left:27px;top:445px;font-size:20px;line-height:28px"><span style="display: inline-block; transform: scaleX(0.9961); transform-origin: 0px 50%; margin-right: -0.56px;">① これを選んで</span></div>
<div class="red" style="left:198px;top:195px;font-size:20px;line-height:28px"><span style="font-family:'Noto Sans CJK JP',sans-serif;display:inline-block;width:21px">←</span><span style="display: inline-block; transform: scaleX(0.9709); transform-origin: 0px 50%; margin-right: -9.47px;">② 左の部分が選択されるようにして</span></div>
<div class="abs" style="left:199px;top:604px;width:354px;height:34px;background:#fff"></div>
<div class="red" style="left:206px;top:604px;font-size:20px;line-height:30px"><span style="display: inline-block; transform: scaleX(0.9644); transform-origin: 0px 50%; margin-right: -9.34px;">③ 四角く囲んでいる部分がid</span></div>
<svg class="abs" style="left:0;top:0" width="962" height="850" viewBox="0 0 962 850">
 <g stroke="#ff0000" fill="none">
  <circle cx="19" cy="497.7" r="16.5" stroke-width="5"></circle>
  <line x1="31" y1="482.5" x2="54" y2="471" stroke-width="3" stroke-linecap="round"></line>
  <rect x="133.5" y="569.5" width="94" height="20" stroke-width="2"></rect>
  <path d="M260 606 L229 590 M229 590 L246 590 M229 590 L232.5 601" stroke-width="2.2" stroke-linecap="round"></path>
 </g>
</svg>
<!-- infobar -->
<div class="abs" style="left:1px;top:13px;width:259px;height:25px;background:#343c45;border-radius:0 3px 3px 0"></div>
<svg class="abs" style="left:96px;top:37.5px" width="18" height="9" viewBox="0 0 18 9"><path d="M0 0 L18 0 L9 8.5 Z" fill="#343c45"></path></svg>
<div class="abs" style="left:1px;top:13px;height:25px;line-height:25px;font-size:12.5px;white-space:nowrap;width:184px;overflow:hidden"><span class="abs" style="right:0;color:#4eb7e8"><span style="color: rgb(111, 195, 106); display: inline-block; transform: scaleX(0.9089); transform-origin: 0px 50%; margin-right: -7.22px;">li#collapscat-2</span><span style="display: inline-block; transform: scaleX(0.8085); transform-origin: 0px 50%; margin-right: -37.66px;">.widget-container.widget_collapscat</span></span></div>
<div class="abs" style="left:191px;top:18px;width:1px;height:15px;background:#5a626b"></div>
<div class="abs" style="left:197px;top:13px;height:25px;line-height:25px;font-size:12.5px;color:#d2d9e2;white-space:nowrap"><span style="display: inline-block; transform: scaleX(0.8435); transform-origin: 0px 50%; margin-right: -10.39px;">172 × 255.8</span></div>
<!-- window frame -->
<div class="abs" style="left:0;top:0;width:962px;height:1px;background:#dcdcdc"></div>
<div class="abs" style="left:0;top:0;width:1px;height:850px;background:#9a2bb4"></div>
<div class="abs" style="left:959px;top:0;width:1px;height:850px;background:#a020c0"></div>
<div class="abs" style="left:960px;top:0;width:2px;height:850px;background:#24384e"></div>

</div>


</body></html>
